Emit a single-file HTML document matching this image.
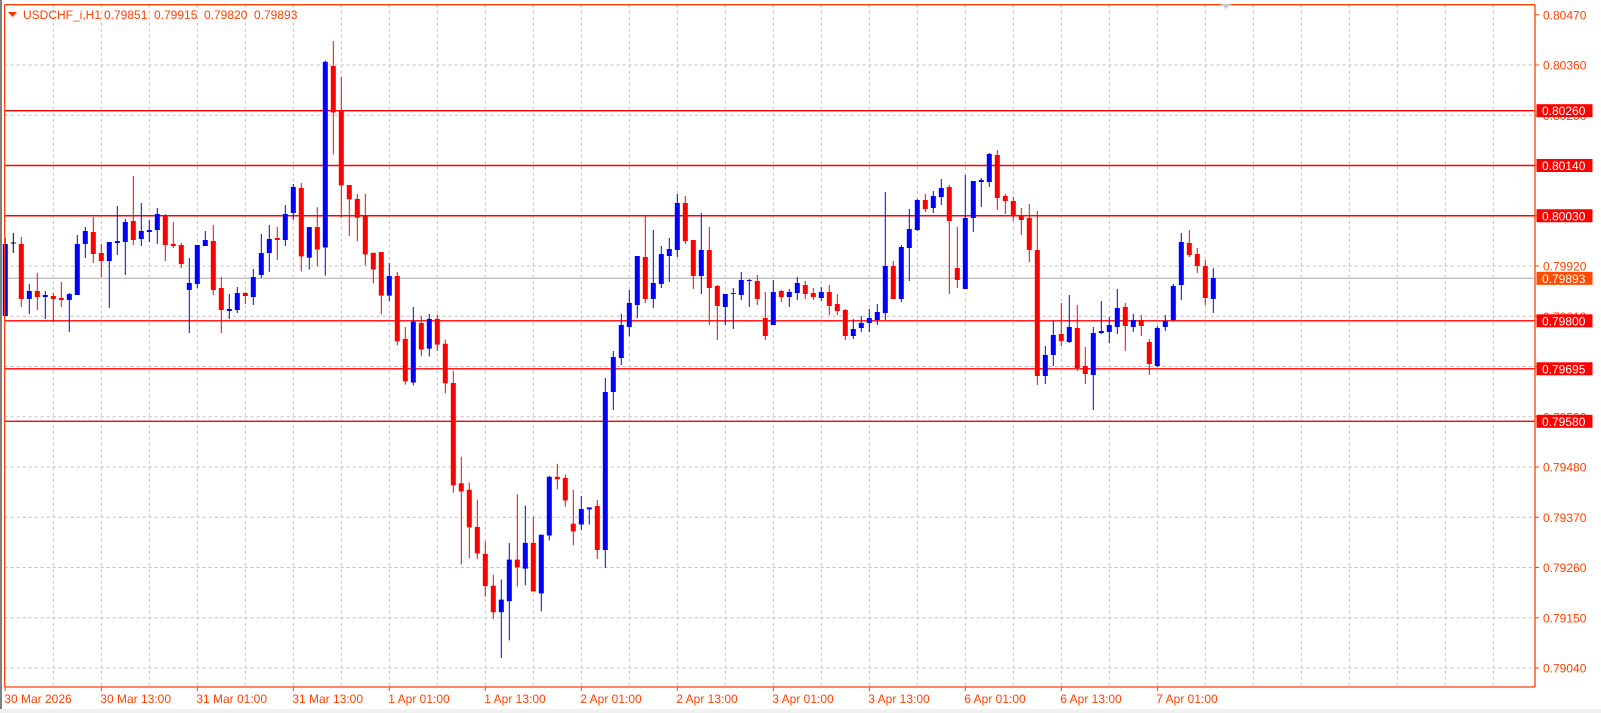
<!DOCTYPE html>
<html><head><meta charset="utf-8">
<style>
html,body{margin:0;padding:0;background:#fff;}
svg{display:block;}
text{font-family:"Liberation Sans",sans-serif;font-size:12px;}
</style></head>
<body>
<svg id="c" width="1601" height="713" xmlns="http://www.w3.org/2000/svg">
<rect x="0" y="0" width="1601" height="713" fill="#fff"/>
<rect x="0" y="0" width="2" height="713" fill="#808080"/>
<rect x="0" y="709" width="1601" height="4" fill="#f0f0f0"/>
<g id="grid"></g>
<g id="hl"></g>
<g id="candles"></g>
<g id="axis"></g>
<polygon points="1221,4 1231,4 1226,9" fill="#c8c8c8"/>
<polygon points="8,12 17,12 12.5,17" fill="#ff3300"/>
<text x="23" y="19" fill="#ff4000">USDCHF_i,H1</text>
<text x="104" y="19" fill="#ff4000">0.79851</text>
<text x="154" y="19" fill="#ff4000">0.79915</text>
<text x="204" y="19" fill="#ff4000">0.79820</text>
<text x="254" y="19" fill="#ff4000">0.79893</text>
</svg>
<script>
var NS="http://www.w3.org/2000/svg";
function el(p,t,a,txt){var e=document.createElementNS(NS,t);for(var k in a)e.setAttribute(k,a[k]);if(txt)e.textContent=txt;document.getElementById(p).appendChild(e);return e;}
var L=4.7,R=1535,T=4.7,B=687;
// grid
for(var k=1;k<=31;k++){var x=5.3+48*k;el("grid","line",{x1:x,y1:T,x2:x,y2:B,stroke:"#c0c0c0","stroke-dasharray":"3,3","stroke-width":1});}
var labels=["0.80470","0.80360","0.80250","0.80140","0.80030","0.79920","0.79810","0.79700","0.79590","0.79480","0.79370","0.79260","0.79150","0.79040"];
for(var k=0;k<14;k++){var y=14.75+50.25*k;
 if(k>0)el("grid","line",{x1:L,y1:y,x2:R,y2:y,stroke:"#c0c0c0","stroke-dasharray":"3,3","stroke-width":1});
 el("axis","line",{x1:R,y1:y,x2:R+4,y2:y,stroke:"#ff4000"});
 el("axis","text",{x:1543,y:y+4.5,fill:"#ff4000"},labels[k]);
}
function py(p){return 14.75+(0.8047-p)/0.0011*50.25;}
// price line
el("hl","line",{x1:L,y1:278.3,x2:R,y2:278.3,stroke:"#c0c0c0","stroke-width":1.3});
var reds=[0.8026,0.8014,0.8003,0.7980,0.79695,0.7958];
reds.forEach(function(p){var y=py(p);el("hl","line",{x1:L,y1:y,x2:R,y2:y,stroke:"#ff0000","stroke-width":1.4});});
// borders
el("axis","line",{x1:L,y1:T,x2:R,y2:T,stroke:"#ff4000","stroke-width":1.3});
el("axis","line",{x1:L,y1:T,x2:L,y2:B,stroke:"#ff4000","stroke-width":1.3});
el("axis","line",{x1:R,y1:T,x2:R,y2:B,stroke:"#ff4000","stroke-width":1.3});
el("axis","line",{x1:L,y1:B,x2:R,y2:B,stroke:"#ff4000","stroke-width":1.3});
// boxes
function box(p,txt,col){var y=py(p);el("axis","rect",{x:1536.5,y:y-6.5,width:56,height:13,fill:col});el("axis","text",{x:1542,y:y+4.5,fill:"#fff"},txt);}
box(0.8026,"0.80260","#ff0000");box(0.8014,"0.80140","#ff0000");box(0.8003,"0.80030","#ff0000");
box(0.79893,"0.79893","#ff4c00");box(0.7980,"0.79800","#ff0000");box(0.79695,"0.79695","#ff0000");box(0.7958,"0.79580","#ff0000");
// time labels
var tl=["30 Mar 2026","30 Mar 13:00","31 Mar 01:00","31 Mar 13:00","1 Apr 01:00","1 Apr 13:00","2 Apr 01:00","2 Apr 13:00","3 Apr 01:00","3 Apr 13:00","6 Apr 01:00","6 Apr 13:00","7 Apr 01:00"];
for(var k=0;k<tl.length;k++){var x=5.3+96*k;el("axis","line",{x1:x,y1:B,x2:x,y2:B+4,stroke:"#ff4000"});el("axis","text",{x:x-1,y:703,fill:"#ff4000"},tl[k]);}
// candles [hi,lo,top,bot,color]
var d=[
[238,316,244,316,"B"],[233,253,243,243.5,"K"],[237,307,244,299,"R"],[284,314,291,299,"B"],[273,310,291,297,"R"],
[291,319,295,297,"B"],[293,322,296,299,"R"],[282,307,298,300,"R"],[293,332,294,300,"B"],[235,295,244,295,"B"],
[227,258,231,244,"B"],[217,263,232,254,"R"],[244,277,253,261,"R"],[242,308,242,261,"B"],[206,255,241,243,"B"],
[219,275,222,242,"B"],[176,245,221,240,"R"],[203,246,231,239,"B"],[220,242,230,232,"B"],[208,244,214,230,"B"],
[214,261,215,245,"R"],[222,248,244,246,"R"],[243,268,245,264,"R"],[258,333,283,290,"B"],[245,288,245,284,"B"],
[231,246,240,246,"B"],[225,295,241,290,"R"],[277,333,288,310,"R"],[294,319,309,311,"B"],[287,313,293,310,"B"],
[292,304,293,296,"R"],[269,305,277,297,"B"],[234,278,253,275,"B"],[225,272,239,253,"B"],[227,260,238,240,"R"],
[205,246,214,240,"B"],[184,220,187,213,"B"],
[183,271.5,187.9,256.4,"R"],[227.1,269.5,227.1,257.7,"B"],[207.1,266.2,227.1,249.5,"R"],[60.6,275.6,61.8,247.5,"B"],
[41,154.4,65.9,112.4,"R"],[76.9,217.7,111.2,185.4,"R"],[185,236,185,199.3,"R"],[194,241.3,198.9,217.7,"R"],
[194,265.4,216.5,254.4,"R"],[252.8,283.4,252.8,269.5,"R"],[252,314.4,252,295.6,"R"],[263,301.3,276,295.6,"B"],
[272,345.4,276,341.3,"R"],[327,384.6,338.9,381.3,"R"],[307,385.4,321.7,382.5,"B"],[316,356.4,323,349.5,"R"],
[314,356.4,318.9,348.6,"B"],[314.8,351,318.9,344.6,"R"],[339.7,393.5,343.8,383.3,"R"],[370.7,492.7,383,485.3,"R"],
[456.8,564.5,483.3,491.4,"R"],[482.5,558.4,489.8,527.4,"R"],[499.6,559.2,527,553.5,"R"],[541.2,596.7,553.9,586.1,"R"],
[574.7,619.2,585.7,612.2,"R"],[579.6,658,599.6,612.2,"B"],[542.9,640.4,559.6,601.2,"B"],[494.3,586.5,559.6,567.3,"R"],
[505.7,585.3,542.9,568.6,"B"],[516.7,591.4,542.9,591.4,"R"],[534.7,611.4,534.7,593.4,"B"],[475.9,540.4,476.8,535.5,"B"],
[463.7,489.4,476.8,479.2,"R"],[474.7,506.5,478,500.4,"R"],[489.8,545.3,523.7,531.4,"R"],[495.9,530.2,509,524.5,"B"],
[507.4,524.5,507.4,509.4,"B"],[500,559,506,550,"R"],[378,568,392,550,"B"],[351,410,357,392,"B"],[314,365,325,358,"B"],
[290,336,303,327,"B"],[256,318,256,305,"B"],[215,303,257,299,"R"],[230,308,283,299,"B"],[246,288,254,284,"B"],
[238,282,249,256,"B"],[194,257,203,250,"B"],[196,244,203,241,"R"],[240,289,240,276,"R"],[213,294,250,276,"B"],
[227,325,250,288,"R"],[285,340,286,306,"R"],[294,325,294,307,"B"],[288,329,293,294,"B"],[272,300,280,295,"B"],
[279,307,280,281,"B"],[275,305,281,299,"R"],[292,340,318,336,"R"],[280,325,292,325,"B"],[290,302,291,297,"R"],
[289,307,292,297,"B"],[277,300,283,293,"B"],[281,299,285,294,"R"],[288,300,293,297,"R"],[287,301,292,298,"B"],
[285,315,292,306,"R"],[294,315,304,311,"R"],[309,340,310,336,"R"],[319,339,329,336,"B"],[316,332,323,328,"B"],
[309,332,318,323,"B"],[304,325,312,320,"B"],[192,320,266,313,"B"],
[261,299,266,299,"R"],[245,302,247,299,"B"],[209,281,229,248,"B"],[199,231,200,230,"B"],[194,212,200,209,"R"],
[191,213,196,208,"B"],[179,205,188,197,"B"],[185,294,187,221,"R"],[227,288,268,280,"R"],[175,289,218,289,"B"],
[181,232,181,218,"B"],[178,207,180,182,"B"],[153,187,154,182,"B"],[150,210,155,198,"R"],[194,214,196,201,"R"],
[197,221,201,216,"R"],[208,235,216,220,"R"],[204,262,218,250,"R"],[211,385,250,376,"R"],[346,384,355,376,"B"],
[321,366,335,355,"B"],[303,346,334,341,"R"],[295,343,327,342,"B"],[305,371,328,368,"R"],[347,384,366,374,"R"],
[327,410,333,375,"B"],[301,334,331,333,"B"],[317,343,325,332,"B"],[289,334,308,327,"B"],[303,351,307,326,"R"],
[314,332,320,327,"B"],[315,336,320,326,"R"],[339,375,342,364,"R"],[326,367,328,366,"B"],[315,331,321,327,"B"],
[284,321,286,320,"B"],[233,300,242,285,"B"],[230,257,243,255,"R"],[248,273,254,266,"R"],[260,305,266,298,"R"],
[268,313,278,299,"B"]
];
var col={B:"#0000ff",R:"#ff0000",K:"#000000"};
for(var i=0;i<d.length;i++){var c=d[i],x=5.3+8*i,cl=col[c[4]];
 el("candles","line",{x1:x,y1:c[0],x2:x,y2:c[1],stroke:cl,"stroke-width":1});
 var h=Math.max(1,c[3]-c[2]);
 if(c[4]=="K")el("candles","line",{x1:x-2.5,y1:c[2],x2:x+2.5,y2:c[2],stroke:cl});
 else el("candles","rect",{x:x-2.5,y:c[2],width:5,height:h,fill:cl});
}
</script>
</body></html>
